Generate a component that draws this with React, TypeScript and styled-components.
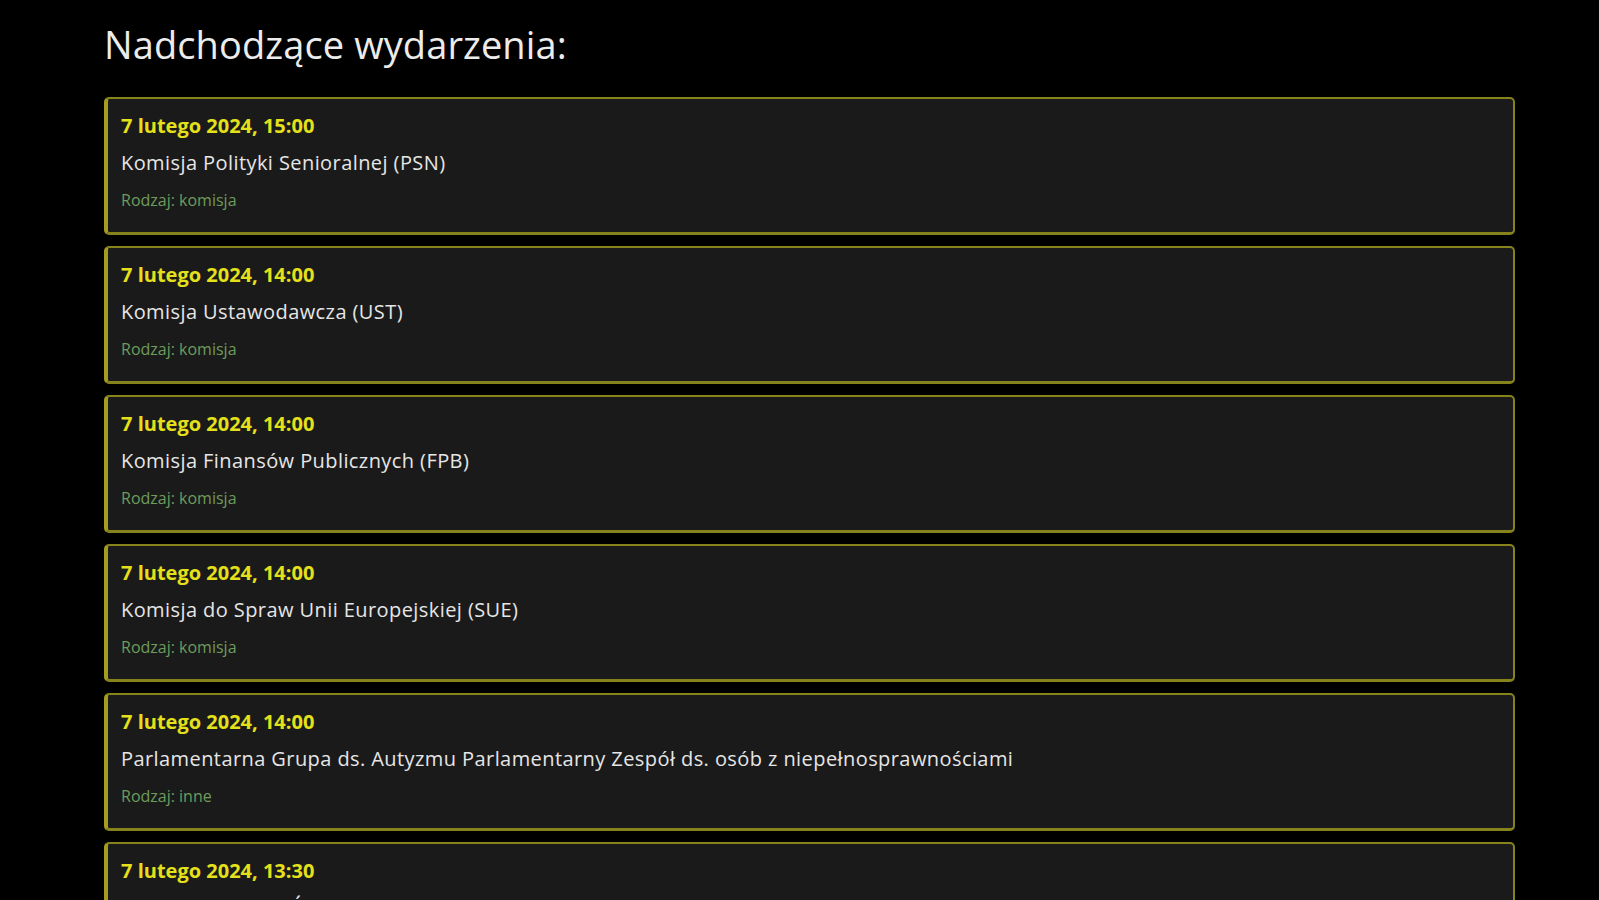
import React, { FunctionComponent } from "react";
import styled, { createGlobalStyle } from "styled-components";

const GlobalStyle = createGlobalStyle`
  html, body {
    margin: 0;
    padding: 0;
    background: #000;
  }
  body {
    font-family: "Open Sans", "Noto Sans", "Liberation Sans", sans-serif;
    color: #e8e8e8;
  }
`;

const Page = styled.div`
  min-height: 900px;
  padding: 0 84px 40px 104px;
  background: #000;
`;

const Title = styled.h1`
  margin: 0;
  padding: 18px 0 0 0;
  height: 97px;
  box-sizing: border-box;
  font-size: 38px;
  font-weight: 400;
  line-height: 52px;
  color: #ececec;
  letter-spacing: 0.1px;
`;

const EventList = styled.div`
  display: flex;
  flex-direction: column;
  gap: 11px;
`;

const EventCard = styled.div`
  box-sizing: border-box;
  height: 138px;
  padding: 8px 13px 0 13px;
  background: #1a1a1a;
  border: 2px solid #86821c;
  border-left: 4px solid #a39c1f;
  border-bottom: 3px solid #86821c;
  border-radius: 5px;
  display: flex;
  flex-direction: column;
`;

const EventDate = styled.div`
  font-size: 20px;
  font-weight: 700;
  line-height: 37px;
  color: #e4e01a;
`;

const EventName = styled.div`
  font-size: 20px;
  font-weight: 400;
  line-height: 37px;
  letter-spacing: 0.42px;
  color: #e6e6e6;
  white-space: nowrap;
`;

const EventType = styled.div`
  font-size: 16px;
  line-height: 39px;
  color: #6e9c5c;
`;

type EventItem = { date: string; name: string; type: string };

const events: EventItem[] = [
  { date: "7 lutego 2024, 15:00", name: "Komisja Polityki Senioralnej (PSN)", type: "komisja" },
  { date: "7 lutego 2024, 14:00", name: "Komisja Ustawodawcza (UST)", type: "komisja" },
  { date: "7 lutego 2024, 14:00", name: "Komisja Finansów Publicznych (FPB)", type: "komisja" },
  { date: "7 lutego 2024, 14:00", name: "Komisja do Spraw Unii Europejskiej (SUE)", type: "komisja" },
  {
    date: "7 lutego 2024, 14:00",
    name: "Parlamentarna Grupa ds. Autyzmu Parlamentarny Zespół ds. osób z niepełnosprawnościami",
    type: "inne",
  },
  {
    date: "7 lutego 2024, 13:30",
    name: "Komisja Ochrony Środowiska, Zasobów Naturalnych i Leśnictwa (OSZ)",
    type: "komisja",
  },
  { date: "7 lutego 2024, 13:00", name: "Komisja Zdrowia (ZDR)", type: "komisja" },
];

const App: FunctionComponent = () => {
  return (
    <>
      <GlobalStyle />
      <Page>
        <Title>Nadchodzące wydarzenia:</Title>
        <EventList>
          {events.map((ev, i) => (
            <EventCard key={i}>
              <EventDate>{ev.date}</EventDate>
              <EventName>{ev.name}</EventName>
              <EventType>Rodzaj: {ev.type}</EventType>
            </EventCard>
          ))}
        </EventList>
      </Page>
    </>
  );
};

export default App;
